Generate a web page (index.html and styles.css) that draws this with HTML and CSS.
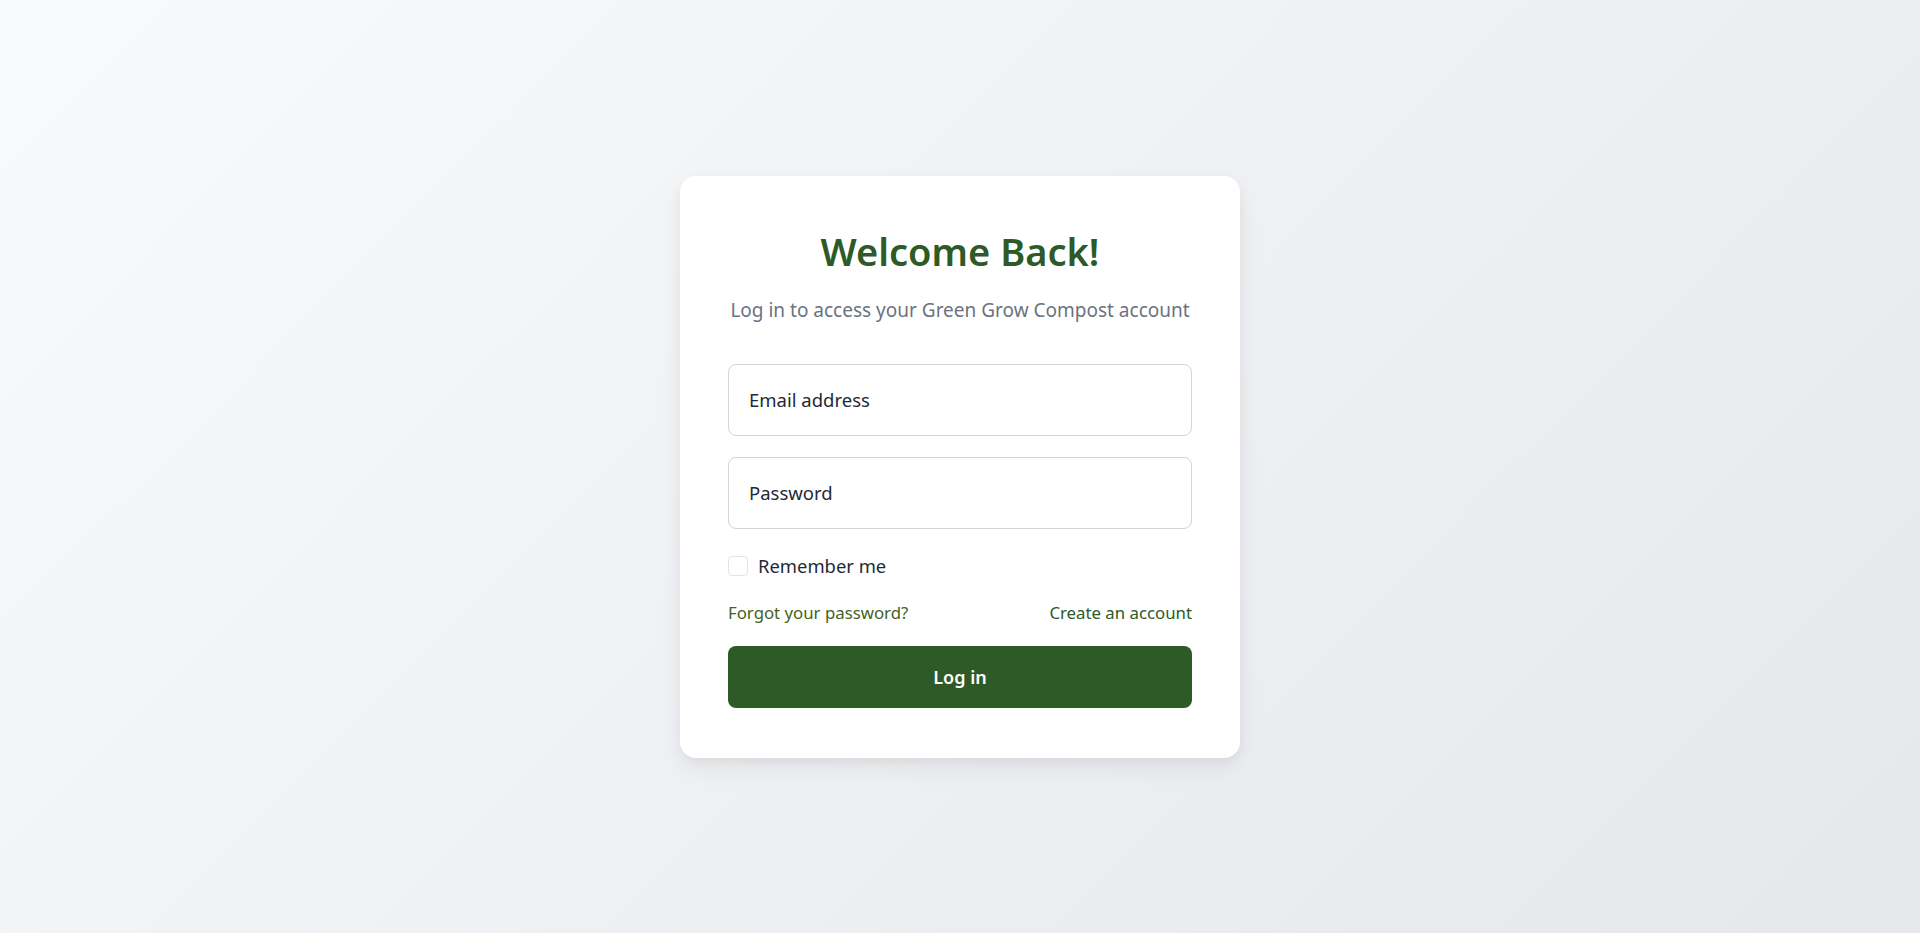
FILE: index.html
```html
<!DOCTYPE html>
<html lang="en">
<head>
<meta charset="utf-8">
<title>Log in - Green Grow Compost</title>
<link rel="stylesheet" href="styles.css">
</head>
<body>
<main class="page">
  <section class="card">
    <h1 class="title">Welcome Back!</h1>
    <p class="subtitle">Log in to access your Green Grow Compost account</p>
    <form class="form">
      <input class="field" type="email" placeholder="Email address">
      <input class="field field-second" type="password" placeholder="Password">
      <label class="remember">
        <span class="checkbox"></span>
        <span class="remember-text">Remember me</span>
      </label>
      <div class="links">
        <a class="link link-forgot" href="#">Forgot your password?</a>
        <a class="link link-create" href="#">Create an account</a>
      </div>
      <button class="submit" type="button">Log in</button>
    </form>
  </section>
</main>
</body>
</html>
```

FILE: styles.css
```css
* { box-sizing: border-box; }
html, body { margin: 0; padding: 0; }
body {
  font-family: "Noto Sans", "Open Sans", sans-serif;
  background: linear-gradient(135deg, #f9fafb 0%, #e5e7eb 100%);
  min-height: 100vh;
}
.page {
  min-height: 100vh;
  display: flex;
  align-items: center;
  justify-content: center;
}
.card {
  width: 560px;
  background: #ffffff;
  border-radius: 16px;
  padding: 48px 48px 50px;
  box-shadow: 0 10px 25px rgba(0, 0, 0, 0.06), 0 4px 10px rgba(0, 0, 0, 0.04);
}
.title {
  margin: 0;
  text-align: center;
  font-size: 38px;
  line-height: 54px;
  font-weight: 600;
  color: #2d5a27;
}
.subtitle {
  margin: 18px 0 0;
  text-align: center;
  font-size: 19px;
  line-height: 28px;
  color: #6b7280;
}
.form {
  margin-top: 40px;
  display: flex;
  flex-direction: column;
}
.field {
  display: block;
  width: 100%;
  height: 72px;
  padding: 0 20px;
  border: 1px solid #d1d5db;
  border-radius: 8px;
  font-family: inherit;
  font-size: 18.5px;
  color: #1f2937;
  background: #fff;
  outline: none;
}
.field::placeholder { color: #1f2937; opacity: 1; }
.field-second { margin-top: 21px; }
.remember {
  margin-top: 23px;
  display: flex;
  align-items: center;
  gap: 10px;
  font-size: 18.4px;
  line-height: 28px;
  color: #1f2937;
}
.checkbox {
  width: 20px;
  height: 20px;
  border: 1px solid #e2e4e8;
  border-radius: 4px;
  background: #fff;
}
.links {
  margin-top: 21px;
  display: flex;
  justify-content: space-between;
  font-size: 16.8px;
  line-height: 24px;
}
.link {
  text-decoration: none;
}
.link-forgot { color: #44621c; }
.link-create { color: #2d5a27; }
.submit {
  margin-top: 21px;
  height: 62px;
  width: 100%;
  border: 0;
  border-radius: 8px;
  background: #2e5a28;
  color: #ffffff;
  font-family: inherit;
  font-size: 18px;
  font-weight: 600;
}
```
